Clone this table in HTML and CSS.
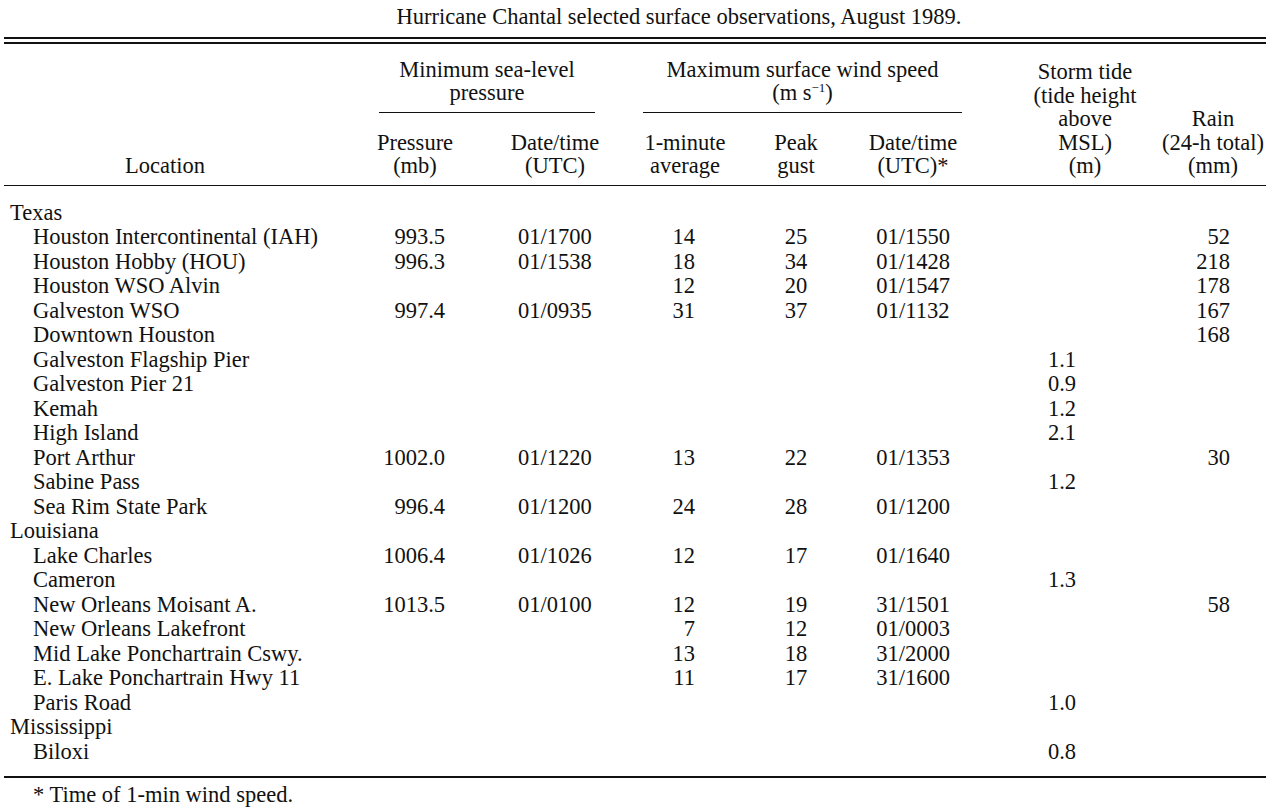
FILE: index.html
```html
<!DOCTYPE html>
<html lang="en">
<head>
<meta charset="utf-8">
<title>Hurricane Chantal selected surface observations</title>
<link rel="stylesheet" href="styles.css">
</head>
<body>
<div class="page">
  <div class="title">Hurricane Chantal selected surface observations, August 1989.</div>
  <div class="double-rule"></div>
  <table class="obs">
    <colgroup>
      <col class="c-loc"><col class="c-pres"><col class="c-pdate"><col class="c-min"><col class="c-gust"><col class="c-wdate"><col class="c-tide"><col class="c-rain">
    </colgroup>
    <thead>
      <tr>
        <th rowspan="2" class="h-loc">Location</th>
        <th colspan="2" class="h-grp"><div class="grp grp-p">Minimum sea-level<br>pressure</div></th>
        <th colspan="3" class="h-grp"><div class="grp grp-w">Maximum surface wind speed<br>(m s<sup>−1</sup>)</div></th>
        <th rowspan="2" class="h-tide">Storm tide<br>(tide height<br>above<br>MSL)<br>(m)</th>
        <th rowspan="2" class="h-rain">Rain<br>(24-h total)<br>(mm)</th>
      </tr>
      <tr>
        <th class="h-sub">Pressure<br>(mb)</th>
        <th class="h-sub">Date/time<br>(UTC)</th>
        <th class="h-sub">1-minute<br>average</th>
        <th class="h-sub">Peak<br>gust</th>
        <th class="h-sub">Date/time<br>(UTC)*</th>
      </tr>
    </thead>
    <tbody>
      <tr><td class="state">Texas</td><td></td><td></td><td></td><td></td><td></td><td></td><td></td></tr>
      <tr><td class="loc">Houston Intercontinental (IAH)</td><td class="pres">993.5</td><td class="ctr">01/1700</td><td class="min">14</td><td class="ctr">25</td><td class="ctr">01/1550</td><td class="ctr"></td><td class="rain">52</td></tr>
      <tr><td class="loc">Houston Hobby (HOU)</td><td class="pres">996.3</td><td class="ctr">01/1538</td><td class="min">18</td><td class="ctr">34</td><td class="ctr">01/1428</td><td class="ctr"></td><td class="rain">218</td></tr>
      <tr><td class="loc">Houston WSO Alvin</td><td class="pres"></td><td class="ctr"></td><td class="min">12</td><td class="ctr">20</td><td class="ctr">01/1547</td><td class="ctr"></td><td class="rain">178</td></tr>
      <tr><td class="loc">Galveston WSO</td><td class="pres">997.4</td><td class="ctr">01/0935</td><td class="min">31</td><td class="ctr">37</td><td class="ctr">01/1132</td><td class="ctr"></td><td class="rain">167</td></tr>
      <tr><td class="loc">Downtown Houston</td><td class="pres"></td><td class="ctr"></td><td class="min"></td><td class="ctr"></td><td class="ctr"></td><td class="ctr"></td><td class="rain">168</td></tr>
      <tr><td class="loc">Galveston Flagship Pier</td><td class="pres"></td><td class="ctr"></td><td class="min"></td><td class="ctr"></td><td class="ctr"></td><td class="ctr">1.1</td><td class="rain"></td></tr>
      <tr><td class="loc">Galveston Pier 21</td><td class="pres"></td><td class="ctr"></td><td class="min"></td><td class="ctr"></td><td class="ctr"></td><td class="ctr">0.9</td><td class="rain"></td></tr>
      <tr><td class="loc">Kemah</td><td class="pres"></td><td class="ctr"></td><td class="min"></td><td class="ctr"></td><td class="ctr"></td><td class="ctr">1.2</td><td class="rain"></td></tr>
      <tr><td class="loc">High Island</td><td class="pres"></td><td class="ctr"></td><td class="min"></td><td class="ctr"></td><td class="ctr"></td><td class="ctr">2.1</td><td class="rain"></td></tr>
      <tr><td class="loc">Port Arthur</td><td class="pres">1002.0</td><td class="ctr">01/1220</td><td class="min">13</td><td class="ctr">22</td><td class="ctr">01/1353</td><td class="ctr"></td><td class="rain">30</td></tr>
      <tr><td class="loc">Sabine Pass</td><td class="pres"></td><td class="ctr"></td><td class="min"></td><td class="ctr"></td><td class="ctr"></td><td class="ctr">1.2</td><td class="rain"></td></tr>
      <tr><td class="loc">Sea Rim State Park</td><td class="pres">996.4</td><td class="ctr">01/1200</td><td class="min">24</td><td class="ctr">28</td><td class="ctr">01/1200</td><td class="ctr"></td><td class="rain"></td></tr>
      <tr><td class="state">Louisiana</td><td></td><td></td><td></td><td></td><td></td><td></td><td></td></tr>
      <tr><td class="loc">Lake Charles</td><td class="pres">1006.4</td><td class="ctr">01/1026</td><td class="min">12</td><td class="ctr">17</td><td class="ctr">01/1640</td><td class="ctr"></td><td class="rain"></td></tr>
      <tr><td class="loc">Cameron</td><td class="pres"></td><td class="ctr"></td><td class="min"></td><td class="ctr"></td><td class="ctr"></td><td class="ctr">1.3</td><td class="rain"></td></tr>
      <tr><td class="loc">New Orleans Moisant A.</td><td class="pres">1013.5</td><td class="ctr">01/0100</td><td class="min">12</td><td class="ctr">19</td><td class="ctr">31/1501</td><td class="ctr"></td><td class="rain">58</td></tr>
      <tr><td class="loc">New Orleans Lakefront</td><td class="pres"></td><td class="ctr"></td><td class="min">7</td><td class="ctr">12</td><td class="ctr">01/0003</td><td class="ctr"></td><td class="rain"></td></tr>
      <tr><td class="loc">Mid Lake Ponchartrain Cswy.</td><td class="pres"></td><td class="ctr"></td><td class="min">13</td><td class="ctr">18</td><td class="ctr">31/2000</td><td class="ctr"></td><td class="rain"></td></tr>
      <tr><td class="loc">E. Lake Ponchartrain Hwy 11</td><td class="pres"></td><td class="ctr"></td><td class="min">11</td><td class="ctr">17</td><td class="ctr">31/1600</td><td class="ctr"></td><td class="rain"></td></tr>
      <tr><td class="loc">Paris Road</td><td class="pres"></td><td class="ctr"></td><td class="min"></td><td class="ctr"></td><td class="ctr"></td><td class="ctr">1.0</td><td class="rain"></td></tr>
      <tr><td class="state">Mississippi</td><td></td><td></td><td></td><td></td><td></td><td></td><td></td></tr>
      <tr><td class="loc">Biloxi</td><td class="pres"></td><td class="ctr"></td><td class="min"></td><td class="ctr"></td><td class="ctr"></td><td class="ctr">0.8</td><td class="rain"></td></tr>
    </tbody>
  </table>
  <div class="footnote">* Time of 1-min wind speed.</div>
</div>
</body>
</html>
```

FILE: styles.css
```css
html, body {
  margin: 0;
  padding: 0;
  background: #ffffff;
}

body {
  font-family: "Liberation Serif", "Times New Roman", serif;
  font-size: 22.5px;
  line-height: 24.5px;
  color: #111111;
}

.page {
  width: 1280px;
  padding: 5px 14px 0 4px;
  box-sizing: border-box;
}

.title {
  text-align: center;
  padding-left: 88px;
  white-space: nowrap;
}

.double-rule {
  margin-top: 7px;
  height: 3px;
  border-top: 2px solid #111;
  border-bottom: 2px solid #111;
}

.obs {
  width: 1262px;
  table-layout: fixed;
  border-collapse: collapse;
  border-bottom: 2px solid #111;
}

.c-loc { width: 356px; }
.c-pres { width: 110px; }
.c-pdate { width: 170px; }
.c-min { width: 90px; }
.c-gust { width: 132px; }
.c-wdate { width: 102px; }
.c-tide { width: 196px; }
.c-rain { width: 106px; }

.obs th,
.obs td {
  padding: 0;
  font-weight: normal;
  white-space: nowrap;
  line-height: 24.5px;
}

.obs thead {
  border-bottom: 1px solid #111;
}

.obs th {
  text-align: center;
  vertical-align: bottom;
  padding-bottom: 7px;
  line-height: 23.5px;
}

.obs th.h-grp {
  vertical-align: top;
  padding-top: 14px;
  padding-bottom: 0;
}

.grp {
  border-bottom: 1px solid #111;
  padding-bottom: 7px;
}

.grp-p {
  margin-left: 19px;
  margin-right: 45px;
}

.grp-w {
  margin-left: 3px;
  margin-right: 2px;
}

.grp sup {
  font-size: 13px;
  line-height: 0;
  vertical-align: 8px;
}

.obs th.h-sub {
  padding-top: 18px;
}

.obs th.h-loc {
  text-align: left;
  padding-left: 121px;
}

.obs th.h-tide {
  padding-left: 46px;
}

.obs td.state {
  padding-left: 6px;
}

.obs td.loc {
  padding-left: 29px;
}

.obs td.pres {
  text-align: right;
  padding-right: 25px;
}

.obs td.min {
  text-align: right;
  padding-right: 35px;
}

.obs td.ctr {
  text-align: center;
}

.obs td.rain {
  text-align: right;
  padding-right: 36px;
}

.obs tbody tr:first-child td {
  padding-top: 15px;
}

.obs tbody tr:last-child td {
  padding-bottom: 12px;
}

.footnote {
  padding-top: 5px;
  padding-left: 29px;
  white-space: nowrap;
}
```
